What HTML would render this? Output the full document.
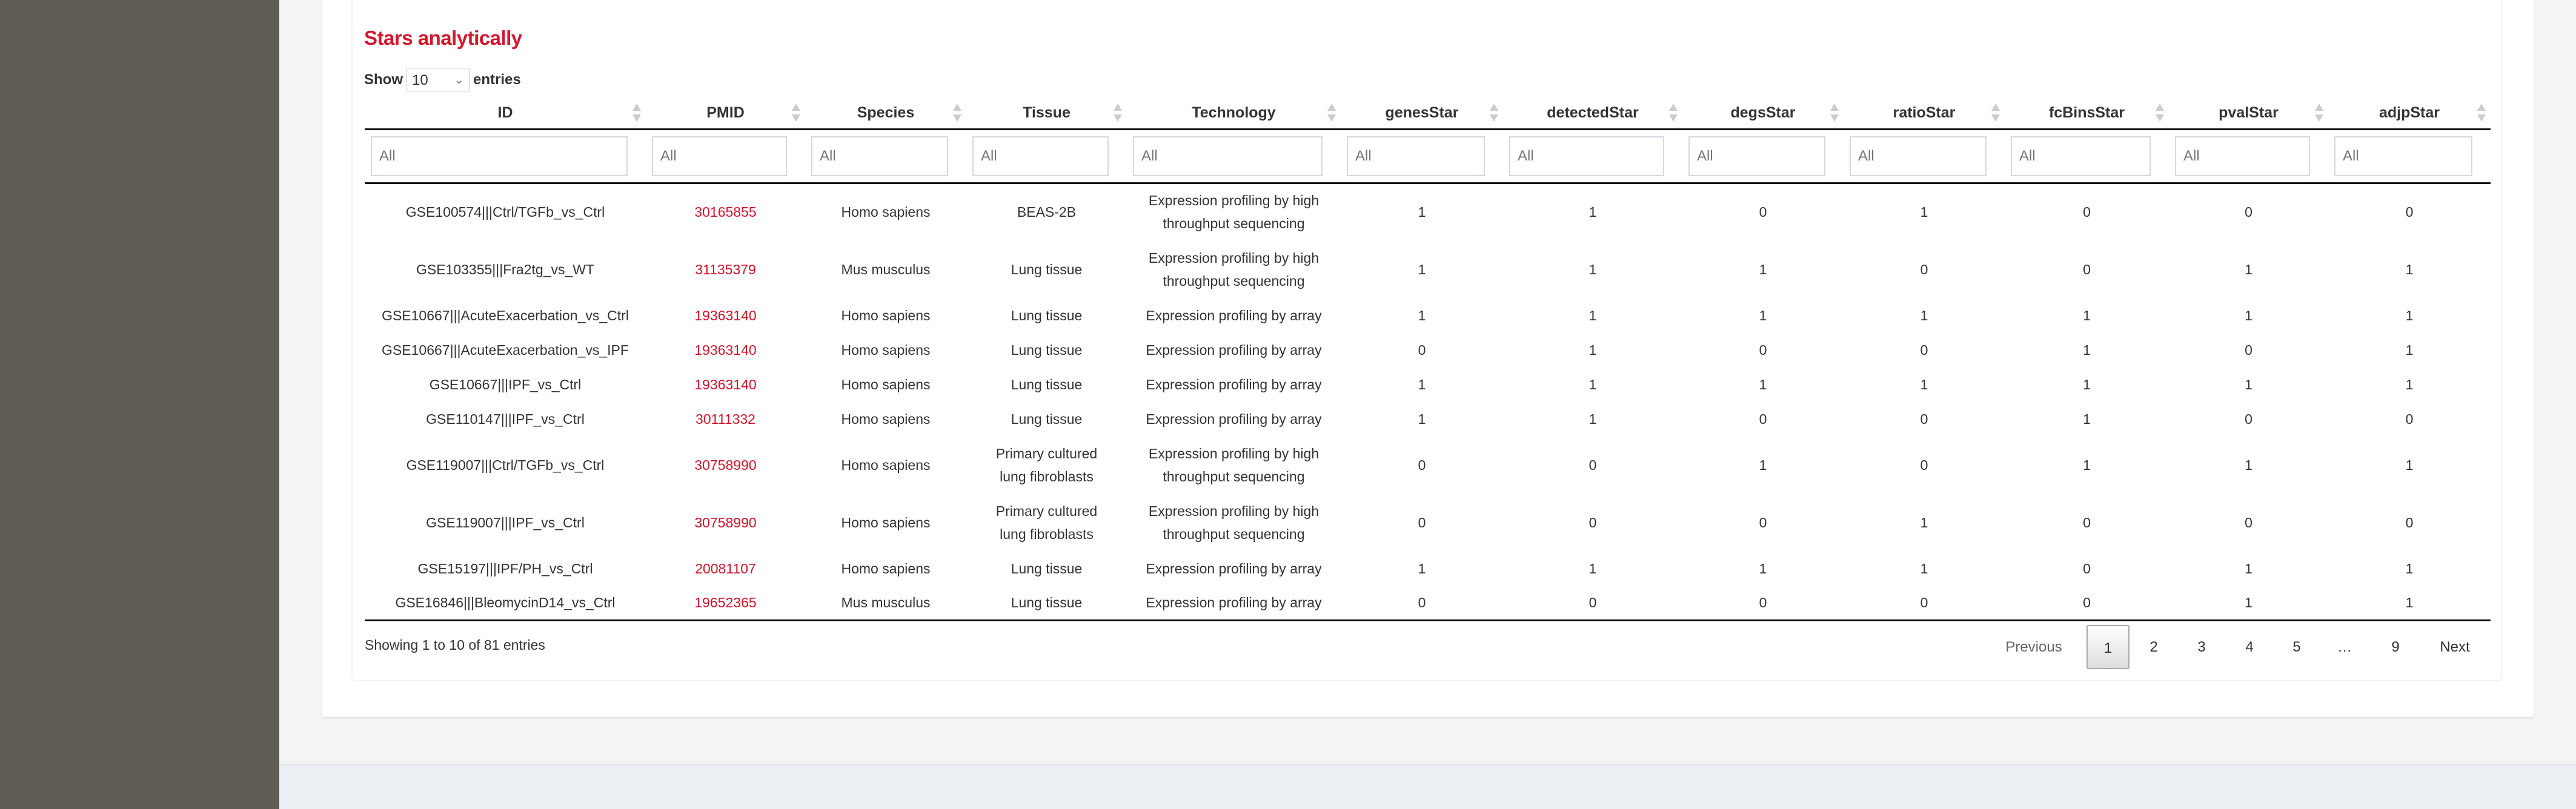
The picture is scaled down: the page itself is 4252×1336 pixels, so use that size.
<!DOCTYPE html>
<html><head><meta charset="utf-8"><style>
*{box-sizing:border-box;margin:0;padding:0}
body{width:4252px;height:1336px;background:#f4f4f4;font-family:"Liberation Sans",sans-serif;color:#333;position:relative;overflow:hidden}
#side{position:absolute;left:0;top:0;width:461px;height:1336px;background:#5f5c53}
#foot{position:absolute;left:461px;top:1262px;right:0;bottom:0;background:#ebeef3;border-top:2px solid #e2e4e8}
#outer{position:absolute;left:531px;top:-10px;width:3651px;height:1194px;background:#fff;border-radius:6px;box-shadow:0 2px 3px rgba(0,0,0,.08)}
#inner{position:absolute;left:580px;top:-10px;width:3550px;height:1135px;background:#fff;border:2px solid #f2f2f2;border-radius:6px}
h2{position:absolute;left:601px;top:44px;font-size:33px;font-weight:bold;color:#d3172e;letter-spacing:-0.5px}
#show{position:absolute;left:601px;top:112px;font-size:24px;font-weight:bold;display:flex;align-items:center;gap:6px}
#show .sel{width:104px;height:39px;border:1px solid #c8c8c8;font-weight:normal;padding:6px 8px;position:relative}
#show .sel span{position:absolute;right:8px;top:6px;color:#777;font-size:20px}
table{position:absolute;left:602px;top:158px;width:3509px;border-collapse:collapse;table-layout:fixed;font-size:23px}
th{height:55px;font-weight:bold;font-size:25px;text-align:center;border-bottom:3px solid #111;position:relative;vertical-align:middle;padding-top:4px}
th .ar{position:absolute;right:8px;top:13px;width:14px;height:30px}
th .ar:before{content:"";position:absolute;left:0;top:0;border:7px solid transparent;border-bottom:12px solid #ccc;border-top:0}
th .ar:after{content:"";position:absolute;left:0;bottom:0;border:7px solid transparent;border-top:12px solid #ccc;border-bottom:0}
tr.f td{height:89px;border-bottom:3px solid #111;padding:0 30px 0 10px;text-align:left}
tr.f input{width:100%;height:66px;border:2px solid #d4d8e2;font:24px "Liberation Sans",sans-serif;padding-left:12px;color:#aaa}
td{text-align:center;vertical-align:middle;line-height:38px;white-space:nowrap}
tr.r1 td{height:95px}
tr.r2 td{height:57px}
tbody tr:last-child td{border-bottom:3px solid #111}
td.p{color:#d0142c}
#info{position:absolute;left:602px;top:1052px;font-size:23px}
#pg{position:absolute;top:1032px;font-size:24px;color:#333}
#pg span{position:absolute;top:0;height:73px;line-height:73px;transform:translateX(-50%)}
#cur{left:3444px;width:71px;border:2px solid #aaa;border-radius:3px;background:linear-gradient(#fff,#ddd);text-align:center;transform:none!important}
</style></head><body>
<div id="side"></div>
<div id="outer"></div>
<div id="inner"></div>
<div id="foot"></div>
<h2>Stars analytically</h2>
<div id="show">Show <div class="sel">10<span>⌄</span></div> entries</div>
<table>
<colgroup><col style="width:464px"><col style="width:263px"><col style="width:266px"><col style="width:265px"><col style="width:353px"><col style="width:268px"><col style="width:296px"><col style="width:266px"><col style="width:266px"><col style="width:271px"><col style="width:263px"><col style="width:268px"></colgroup>
<thead><tr><th>ID<i class="ar"></i></th><th>PMID<i class="ar"></i></th><th>Species<i class="ar"></i></th><th>Tissue<i class="ar"></i></th><th>Technology<i class="ar"></i></th><th>genesStar<i class="ar"></i></th><th>detectedStar<i class="ar"></i></th><th>degsStar<i class="ar"></i></th><th>ratioStar<i class="ar"></i></th><th>fcBinsStar<i class="ar"></i></th><th>pvalStar<i class="ar"></i></th><th>adjpStar<i class="ar"></i></th></tr>
<tr class="f"><td><input placeholder="All"></td><td><input placeholder="All"></td><td><input placeholder="All"></td><td><input placeholder="All"></td><td><input placeholder="All"></td><td><input placeholder="All"></td><td><input placeholder="All"></td><td><input placeholder="All"></td><td><input placeholder="All"></td><td><input placeholder="All"></td><td><input placeholder="All"></td><td><input placeholder="All"></td></tr></thead>
<tbody>
<tr class="r1"><td>GSE100574|||Ctrl/TGFb_vs_Ctrl</td><td class="p">30165855</td><td>Homo sapiens</td><td>BEAS-2B</td><td>Expression profiling by high<br>throughput sequencing</td><td>1</td><td>1</td><td>0</td><td>1</td><td>0</td><td>0</td><td>0</td></tr>
<tr class="r1"><td>GSE103355|||Fra2tg_vs_WT</td><td class="p">31135379</td><td>Mus musculus</td><td>Lung tissue</td><td>Expression profiling by high<br>throughput sequencing</td><td>1</td><td>1</td><td>1</td><td>0</td><td>0</td><td>1</td><td>1</td></tr>
<tr class="r2"><td>GSE10667|||AcuteExacerbation_vs_Ctrl</td><td class="p">19363140</td><td>Homo sapiens</td><td>Lung tissue</td><td>Expression profiling by array</td><td>1</td><td>1</td><td>1</td><td>1</td><td>1</td><td>1</td><td>1</td></tr>
<tr class="r2"><td>GSE10667|||AcuteExacerbation_vs_IPF</td><td class="p">19363140</td><td>Homo sapiens</td><td>Lung tissue</td><td>Expression profiling by array</td><td>0</td><td>1</td><td>0</td><td>0</td><td>1</td><td>0</td><td>1</td></tr>
<tr class="r2"><td>GSE10667|||IPF_vs_Ctrl</td><td class="p">19363140</td><td>Homo sapiens</td><td>Lung tissue</td><td>Expression profiling by array</td><td>1</td><td>1</td><td>1</td><td>1</td><td>1</td><td>1</td><td>1</td></tr>
<tr class="r2"><td>GSE110147|||IPF_vs_Ctrl</td><td class="p">30111332</td><td>Homo sapiens</td><td>Lung tissue</td><td>Expression profiling by array</td><td>1</td><td>1</td><td>0</td><td>0</td><td>1</td><td>0</td><td>0</td></tr>
<tr class="r1"><td>GSE119007|||Ctrl/TGFb_vs_Ctrl</td><td class="p">30758990</td><td>Homo sapiens</td><td>Primary cultured<br>lung fibroblasts</td><td>Expression profiling by high<br>throughput sequencing</td><td>0</td><td>0</td><td>1</td><td>0</td><td>1</td><td>1</td><td>1</td></tr>
<tr class="r1"><td>GSE119007|||IPF_vs_Ctrl</td><td class="p">30758990</td><td>Homo sapiens</td><td>Primary cultured<br>lung fibroblasts</td><td>Expression profiling by high<br>throughput sequencing</td><td>0</td><td>0</td><td>0</td><td>1</td><td>0</td><td>0</td><td>0</td></tr>
<tr class="r2"><td>GSE15197|||IPF/PH_vs_Ctrl</td><td class="p">20081107</td><td>Homo sapiens</td><td>Lung tissue</td><td>Expression profiling by array</td><td>1</td><td>1</td><td>1</td><td>1</td><td>0</td><td>1</td><td>1</td></tr>
<tr class="r2"><td>GSE16846|||BleomycinD14_vs_Ctrl</td><td class="p">19652365</td><td>Mus musculus</td><td>Lung tissue</td><td>Expression profiling by array</td><td>0</td><td>0</td><td>0</td><td>0</td><td>0</td><td>1</td><td>1</td></tr>
</tbody></table>
<div id="info">Showing 1 to 10 of 81 entries</div>
<div id="pg">
<span style="left:3357px;color:#666">Previous</span>
<span id="cur">1</span>
<span style="left:3555px">2</span>
<span style="left:3634px">3</span>
<span style="left:3713px">4</span>
<span style="left:3791px">5</span>
<span style="left:3870px">…</span>
<span style="left:3954px">9</span>
<span style="left:4052px">Next</span>
</div>
</body></html>
